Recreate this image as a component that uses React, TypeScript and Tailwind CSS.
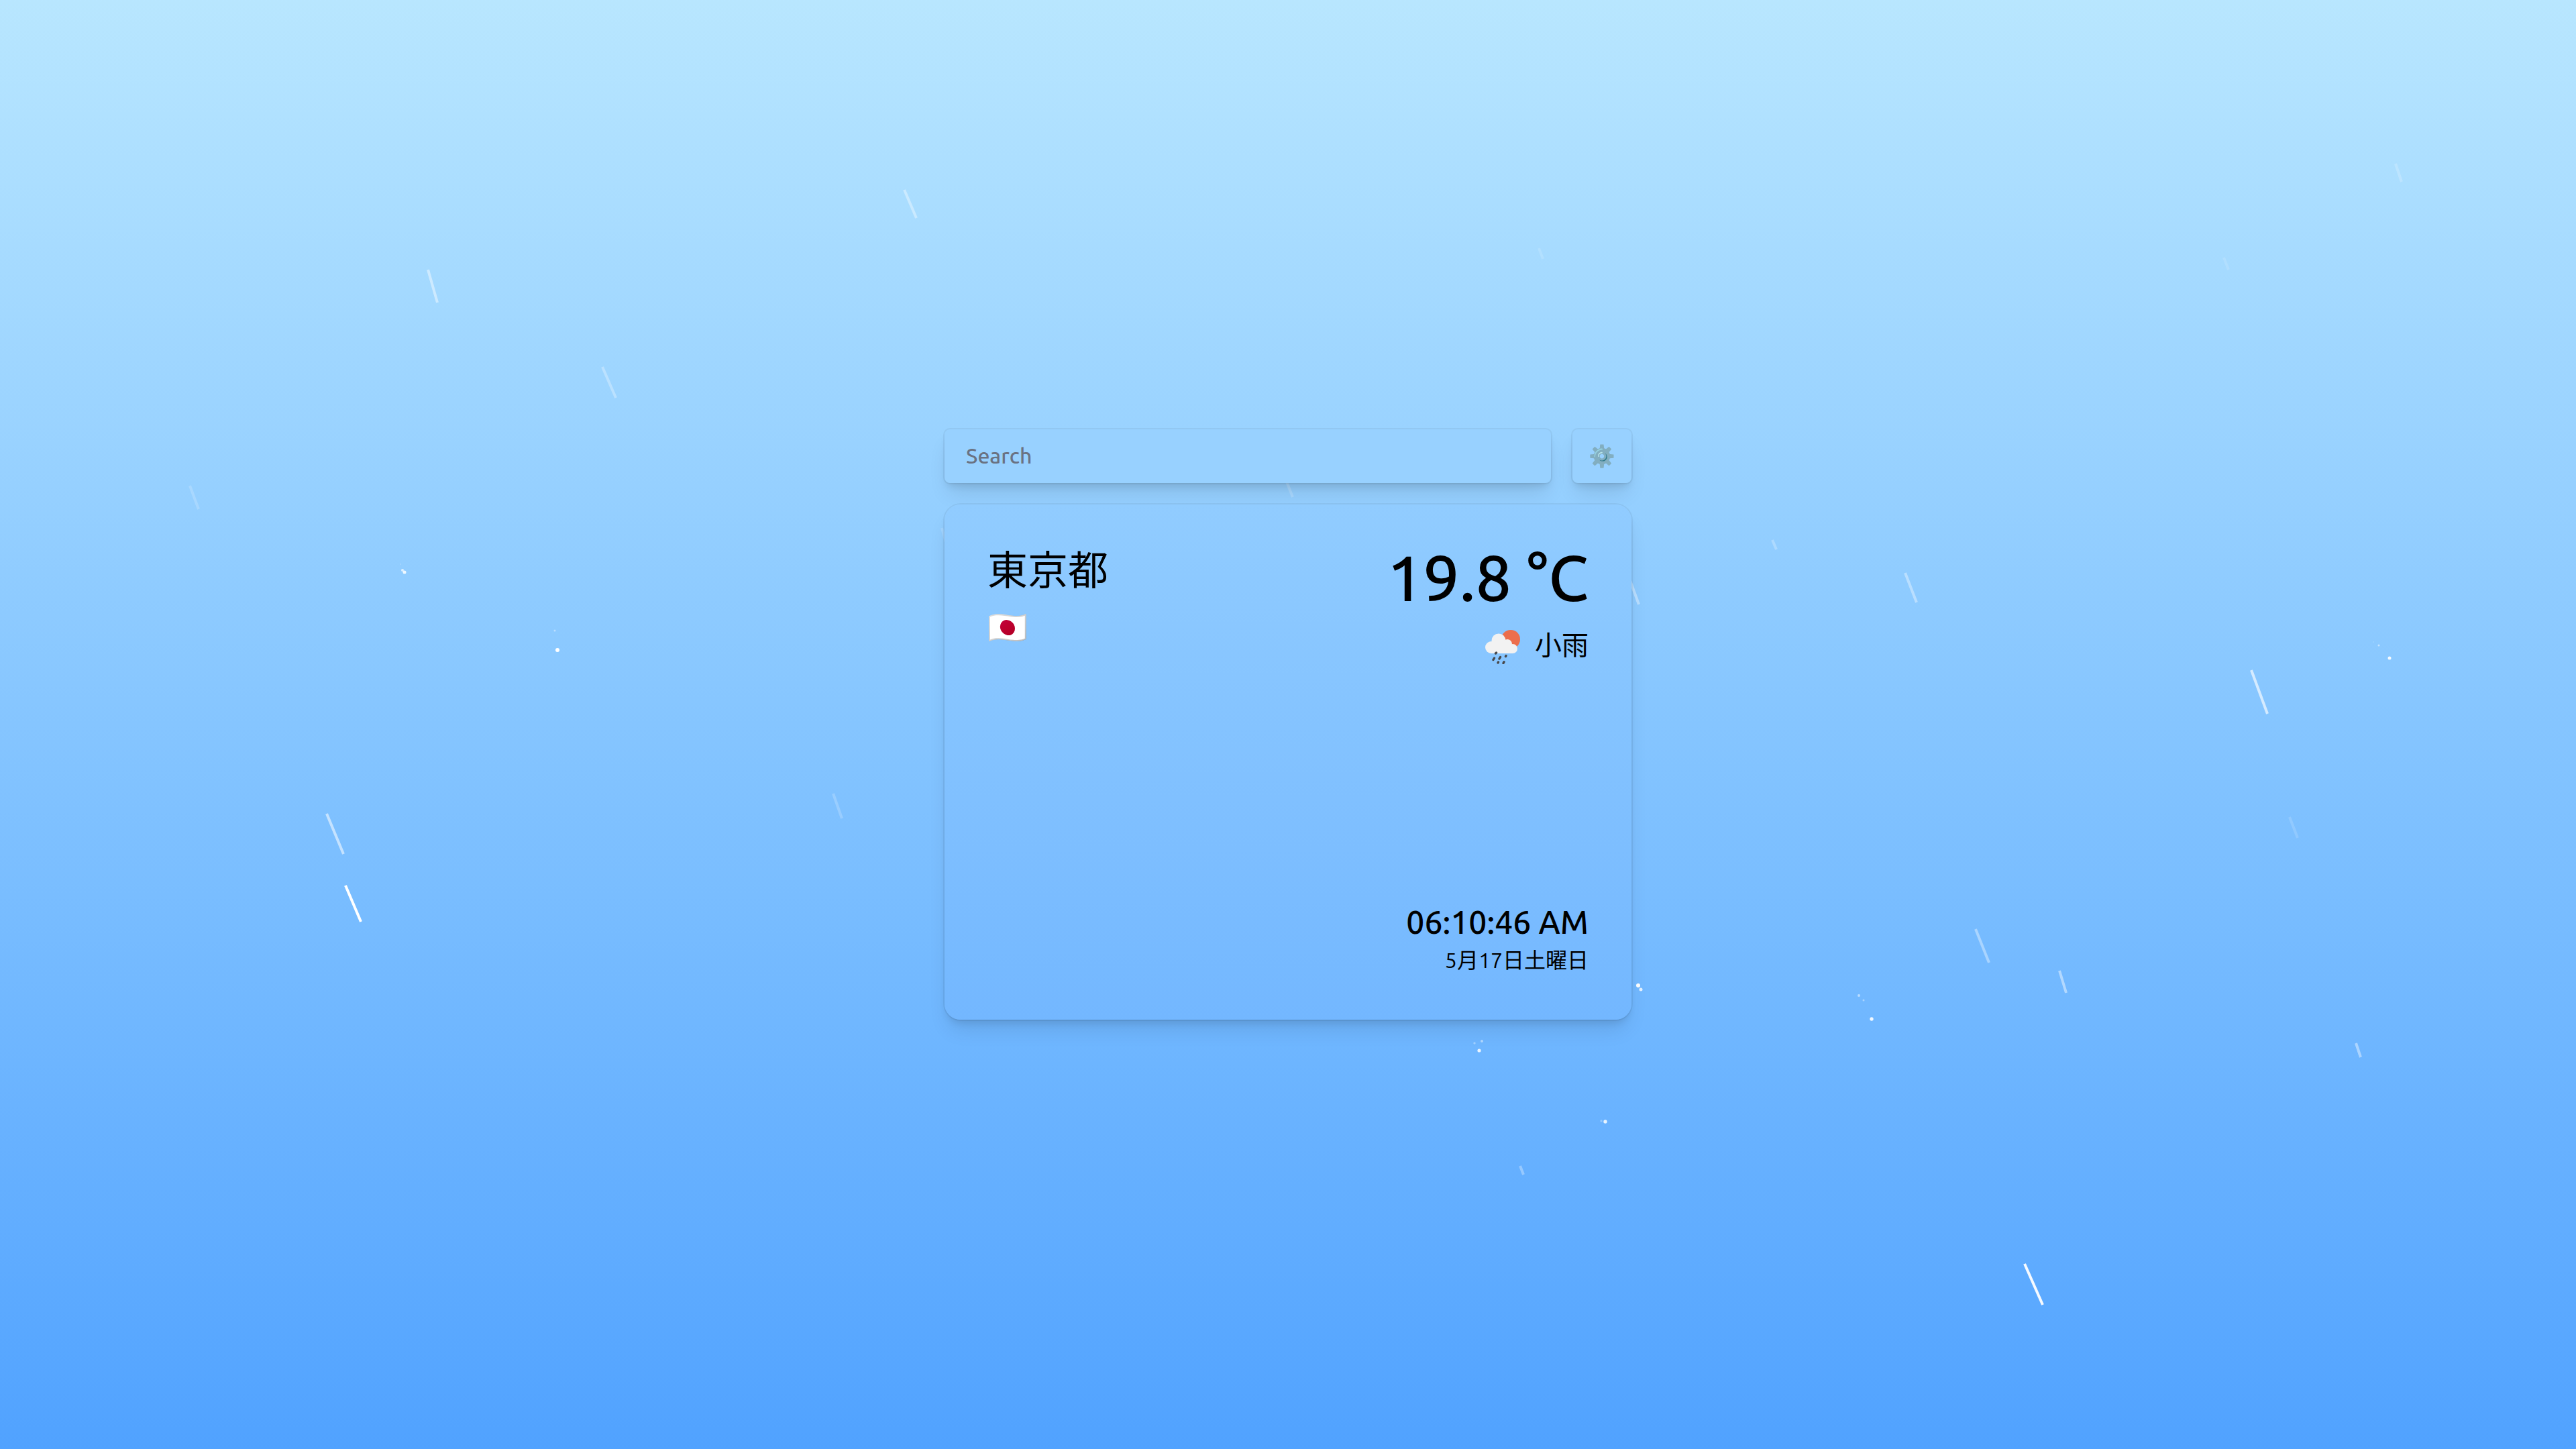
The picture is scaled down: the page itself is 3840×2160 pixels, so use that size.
type Streak = [x1: number, y1: number, x2: number, y2: number, opacity: number];
type Splash = [cx: number, cy: number, r: number, opacity: number];

const streaks: Streak[] = [
  [638, 402, 652, 451, 0.45],
  [1348, 283, 1366, 325, 0.38],
  [898, 547, 918, 593, 0.3],
  [283, 724, 296, 759, 0.18],
  [487, 1213, 512, 1273, 0.55],
  [515, 1320, 538, 1374, 1],
  [1242, 1183, 1255, 1220, 0.2],
  [1404, 787, 1411, 812, 0.15],
  [1910, 698, 1927, 741, 0.18],
  [3571, 244, 3580, 271, 0.2],
  [2294, 370, 2300, 386, 0.14],
  [3315, 384, 3322, 402, 0.12],
  [2642, 805, 2648, 819, 0.25],
  [2840, 854, 2857, 898, 0.38],
  [3356, 999, 3380, 1064, 0.65],
  [2428, 860, 2443, 901, 0.38],
  [2945, 1385, 2965, 1435, 0.38],
  [3070, 1447, 3080, 1480, 0.45],
  [3413, 1218, 3425, 1249, 0.15],
  [3512, 1555, 3519, 1576, 0.42],
  [3018, 1884, 3045, 1945, 0.95],
  [2266, 1738, 2271, 1751, 0.32],
];

const splashes: Splash[] = [
  [600, 850, 2, 0.7],
  [603, 853, 2.5, 0.85],
  [597, 841, 1, 0.2],
  [827, 940, 1.5, 0.4],
  [831, 969, 3, 1],
  [3546, 962, 1.5, 0.5],
  [3562, 981, 2.5, 0.9],
  [3538, 957, 1, 0.15],
  [2771, 1484, 2, 0.5],
  [2778, 1491, 1.5, 0.4],
  [2790, 1519, 2.7, 0.9],
  [2442, 1469, 3, 1],
  [2446, 1475, 2.5, 0.8],
  [2198, 1555, 1.7, 0.35],
  [2209, 1552, 2, 0.45],
  [2205, 1566, 2.6, 0.85],
  [2387, 1671, 1.7, 0.3],
  [2393, 1672, 2.7, 0.85],
];

function Rain() {
  return (
    <svg
      aria-hidden="true"
      viewBox="0 0 3840 2160"
      preserveAspectRatio="xMidYMid slice"
      className="pointer-events-none absolute inset-0 size-full"
    >
      <g stroke="white" strokeWidth="4">
        {streaks.map(([x1, y1, x2, y2, opacity]) => (
          <line key={`${x1}-${y1}`} x1={x1} y1={y1} x2={x2} y2={y2} opacity={opacity} />
        ))}
      </g>
      <g fill="white">
        {splashes.map(([cx, cy, r, opacity]) => (
          <circle key={`${cx}-${cy}`} cx={cx} cy={cy} r={r} opacity={opacity} />
        ))}
      </g>
    </svg>
  );
}

function SunShowerIcon() {
  return (
    <svg aria-hidden="true" viewBox="0 0 56 56" className="size-14">
      <circle cx="40" cy="19" r="14" fill="#ec6e4c" />
      <g fill="#f2f2f2">
        <circle cx="11" cy="31" r="9" />
        <circle cx="22" cy="21" r="10.5" />
        <circle cx="35" cy="26" r="7" />
        <circle cx="43" cy="33" r="7" />
        <path d="M11 25h26l8 8-2 7H11z" />
      </g>
      <path
        d="M17.500 40l1-1M14 49.500l1.500-2.500M23 48l1.500-2.500M32.500 44.500l.5-1M21 54l.5-1M29 54.500l1-1.800"
        stroke="#48484a"
        strokeWidth="3.400"
        strokeLinecap="round"
      />
    </svg>
  );
}

export default function App() {
  return (
    <main className="relative flex min-h-screen items-center justify-center bg-linear-to-b from-sky-200 to-blue-400 font-['Ubuntu_Sans','Ubuntu','Noto_Sans_CJK_JP',sans-serif] text-black">
      <Rain />
      <div className="relative flex w-full max-w-[1024px] flex-col gap-8">
        <form className="flex gap-8">
          <input
            type="text"
            aria-label="Search"
            placeholder="Search"
            className="min-w-0 flex-1 rounded-lg bg-[#98d1ff] px-8 py-4 text-[32px] leading-[48px] font-medium shadow-[0_0_0_2px_rgb(0_0_0/0.05),0_20px_30px_-6px_rgb(0_0_0/0.1),0_8px_12px_-4px_rgb(0_0_0/0.1)] outline-none placeholder:text-gray-500"
          />
          <button
            type="button"
            aria-label="Settings"
            className="w-[88px] rounded-lg bg-[#98d1ff] text-[32px] leading-[48px] shadow-[0_0_0_2px_rgb(0_0_0/0.05),0_20px_30px_-6px_rgb(0_0_0/0.1),0_8px_12px_-4px_rgb(0_0_0/0.1)]"
          >
            ⚙️
          </button>
        </form>
        <section className="flex aspect-4/3 flex-col justify-between rounded-3xl bg-linear-to-b from-[#91ccff] to-[#73b7ff] p-16 shadow-[0_0_0_2px_rgb(0_0_0/0.05),0_20px_30px_-6px_rgb(0_0_0/0.1),0_8px_12px_-4px_rgb(0_0_0/0.1)]">
          <div className="flex justify-between">
            <div>
              <h1 className="text-[60px] leading-[72px]">東京都</h1>
              <p className="mt-4 text-[48px] leading-[64px]">🇯🇵</p>
            </div>
            <div className="text-right">
              <p className="text-[96px] leading-none font-medium">19.8 °C</p>
              <div className="mt-5 flex items-center justify-end gap-5">
                <SunShowerIcon />
                <p className="text-[40px] leading-[60px]">小雨</p>
              </div>
            </div>
          </div>
          <div className="text-right">
            <p className="text-[48px] leading-[64px] font-medium">06:10:46 AM</p>
            <p className="text-[32px] leading-[48px]">5月17日土曜日</p>
          </div>
        </section>
      </div>
    </main>
  );
}
